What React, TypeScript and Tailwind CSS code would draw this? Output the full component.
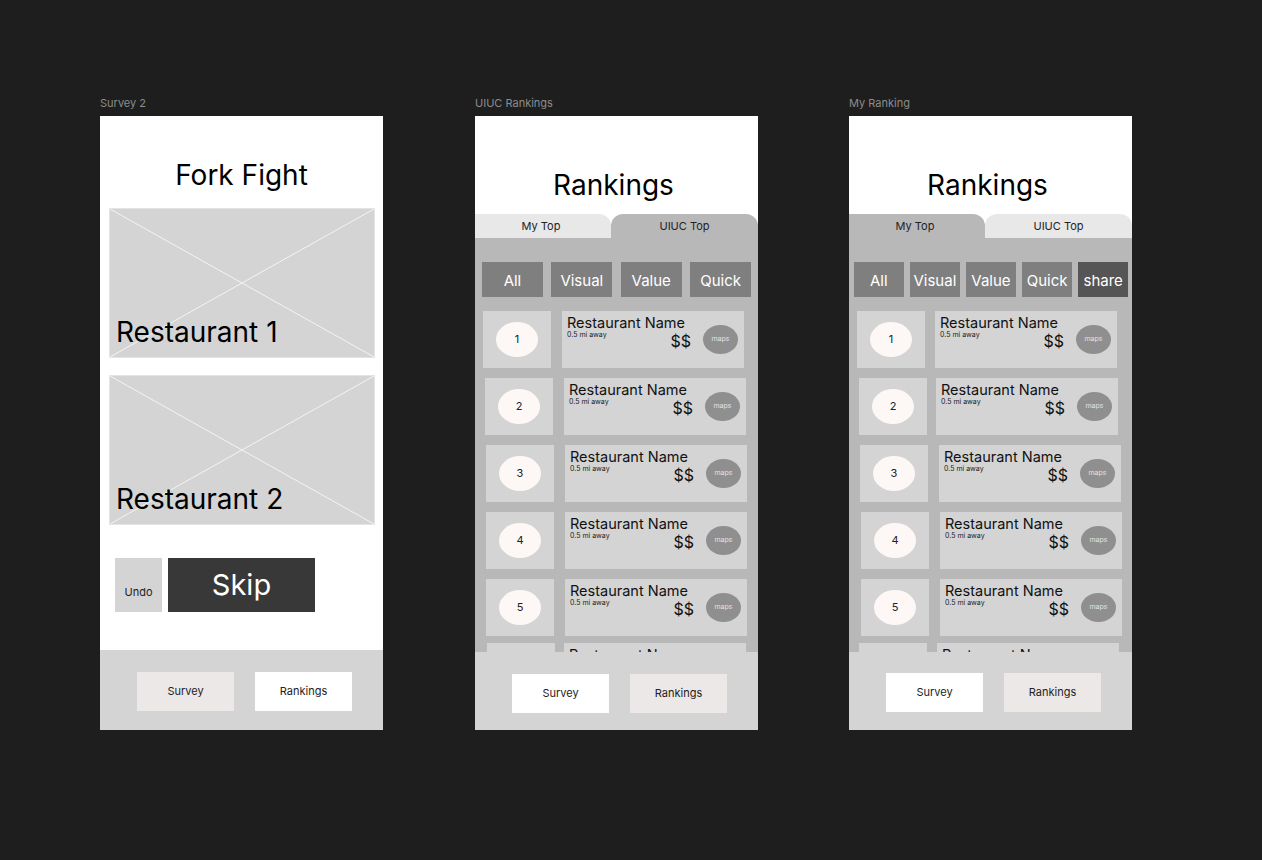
import React from "react"

type RowOffset = { ml: string; gap: string; mt?: string }

const uiucRows: RowOffset[] = [
  { ml: "ml-[8px]", gap: "gap-[11px]" },
  { ml: "ml-[10px]", gap: "gap-[11px]" },
  { ml: "ml-[11px]", gap: "gap-[11px]" },
  { ml: "ml-[11px]", gap: "gap-[11px]" },
  { ml: "ml-[11px]", gap: "gap-[11px]" },
  { ml: "ml-[12px]", gap: "gap-[9px]", mt: "-mt-[3px]" },
]

const myRows: RowOffset[] = [
  { ml: "ml-[8px]", gap: "gap-[10px]" },
  { ml: "ml-[10px]", gap: "gap-[9px]" },
  { ml: "ml-[11px]", gap: "gap-[11px]" },
  { ml: "ml-[12px]", gap: "gap-[11px]" },
  { ml: "ml-[12px]", gap: "gap-[11px]" },
  { ml: "ml-[10px]", gap: "gap-[10px]", mt: "-mt-[3px]" },
]

function FrameLabel({ children }: { children: React.ReactNode }) {
  return <div className="mb-[6px] h-[14px] text-[11px] leading-[14px] text-[#8c8c8c]">{children}</div>
}

function Placeholder({ label }: { label: string }) {
  return (
    <div className="relative mx-[9px] flex h-[150px] w-[266px] items-end border border-[#e4e4e4] bg-[#d4d4d4]">
      <svg className="absolute inset-0 h-full w-full" viewBox="0 0 266 150" preserveAspectRatio="none">
        <line x1="0" y1="0" x2="266" y2="150" stroke="#f4f4f4" strokeWidth="1" />
        <line x1="266" y1="0" x2="0" y2="150" stroke="#f4f4f4" strokeWidth="1" />
      </svg>
      <span className="relative pb-[8px] pl-[6px] text-[28px] leading-[34px] text-black">{label}</span>
    </div>
  )
}

function BottomBar({ active, pt }: { active: "survey" | "rankings"; pt: string }) {
  return (
    <div className={`flex flex-1 gap-[21px] bg-[#d4d4d4] pl-[37px] ${pt}`}>
      <div
        className={`flex h-[39px] w-[97px] items-center justify-center text-[11px] text-[#222] ${
          active === "survey" ? "bg-[#ede8e8]" : "bg-white"
        }`}
      >
        Survey
      </div>
      <div
        className={`flex h-[39px] w-[97px] items-center justify-center text-[11px] text-[#222] ${
          active === "rankings" ? "bg-[#ede8e8]" : "bg-white"
        }`}
      >
        Rankings
      </div>
    </div>
  )
}

function SurveyFrame() {
  return (
    <div className="flex h-[614px] w-[283px] flex-col bg-white">
      <div className="h-[92px] pt-[42px] text-center text-[28px] leading-[34px] text-black">Fork Fight</div>
      <Placeholder label="Restaurant 1" />
      <div className="h-[17px]" />
      <Placeholder label="Restaurant 2" />
      <div className="mt-[33px] flex gap-[6px] pl-[15px]">
        <div className="flex h-[54px] w-[47px] items-end justify-center bg-[#d4d4d4] pb-[13px] text-[11px] leading-[14px] text-[#222]">
          Undo
        </div>
        <div className="flex h-[54px] w-[147px] items-center justify-center bg-[#383838] text-[29px] leading-[34px] text-white">
          Skip
        </div>
      </div>
      <div className="h-[38px]" />
      <BottomBar active="survey" pt="pt-[22px]" />
    </div>
  )
}

function RankRow({ n, offset }: { n: number; offset: RowOffset }) {
  return (
    <div className={`flex shrink-0 ${offset.ml} ${offset.gap} ${offset.mt ?? ""}`}>
      <div className="flex h-[57px] w-[68px] items-center justify-center bg-[#d4d4d4]">
        <div className="flex h-[35px] w-[42px] items-center justify-center rounded-[50%] bg-[#fdf8f6] text-[11px] text-[#222]">
          {n}
        </div>
      </div>
      <div className="flex h-[57px] w-[182px] bg-[#d4d4d4] pl-[5px] pr-[6px]">
        <div className="flex flex-1 flex-col pt-[4px]">
          <div className="text-[14.5px] leading-[16px] text-[#111]">Restaurant Name</div>
          <div className="text-[7px] leading-[8px] text-[#222]">0.5 mi away</div>
          <div className="-mt-[6px] self-end pr-[12px] text-[16px] leading-[16px] text-[#111]">$$</div>
        </div>
        <div className="flex h-[29px] w-[35px] items-center justify-center self-center rounded-[50%] bg-[#8f8f8f] text-[7px] text-[#e2e2e2]">
          maps
        </div>
      </div>
    </div>
  )
}

function RankingsFrame({ mine }: { mine: boolean }) {
  const filters = mine ? ["All", "Visual", "Value", "Quick", "share"] : ["All", "Visual", "Value", "Quick"]
  const rows = mine ? myRows : uiucRows
  return (
    <div className="flex h-[614px] w-[283px] flex-col bg-white">
      <div className="h-[98px] shrink-0 pr-[6px] pt-[52px] text-center text-[28px] leading-[34px] text-black">
        Rankings
      </div>
      <div className="flex h-[24px] shrink-0 text-[11px] text-[#222]">
        <div
          className={`flex w-[136px] items-center justify-center rounded-tr-[12px] pr-[4px] ${
            mine ? "bg-[#b8b8b8]" : "bg-[#e8e8e8]"
          }`}
        >
          My Top
        </div>
        <div
          className={`flex flex-1 items-center justify-center rounded-t-[12px] ${
            mine ? "bg-[#e8e8e8]" : "bg-[#b8b8b8]"
          }`}
        >
          UIUC Top
        </div>
      </div>
      <div className="flex h-[414px] shrink-0 flex-col overflow-hidden bg-[#b8b8b8] pt-[24px]">
        <div className={`flex h-[35px] shrink-0 ${mine ? "gap-[6.5px] pl-[5px] pr-[4px]" : "gap-[8.5px] px-[7px]"}`}>
          {filters.map((f) => (
            <div
              key={f}
              className={`flex flex-1 items-center justify-center pt-[4px] text-[15px] text-white ${
                f === "share" ? "bg-[#555555]" : "bg-[#7f7f7f]"
              }`}
            >
              {f}
            </div>
          ))}
        </div>
        <div className="mt-[14px] flex flex-col gap-[10px]">
          {rows.map((r, i) => (
            <RankRow key={i} n={i + 1} offset={r} />
          ))}
        </div>
      </div>
      <BottomBar active="rankings" pt={mine ? "pt-[21px]" : "pt-[22px]"} />
    </div>
  )
}

export default function App() {
  return (
    <div
      className="flex h-screen w-full gap-[92px] bg-[#1e1e1e] pl-[100px] pt-[96px]"
      style={{ fontFamily: "Inter, 'Noto Sans', sans-serif" }}
    >
      <div>
        <FrameLabel>Survey 2</FrameLabel>
        <SurveyFrame />
      </div>
      <div>
        <FrameLabel>UIUC Rankings</FrameLabel>
        <RankingsFrame mine={false} />
      </div>
      <div className="-ml-[1px]">
        <FrameLabel>My Ranking</FrameLabel>
        <RankingsFrame mine={true} />
      </div>
    </div>
  )
}
